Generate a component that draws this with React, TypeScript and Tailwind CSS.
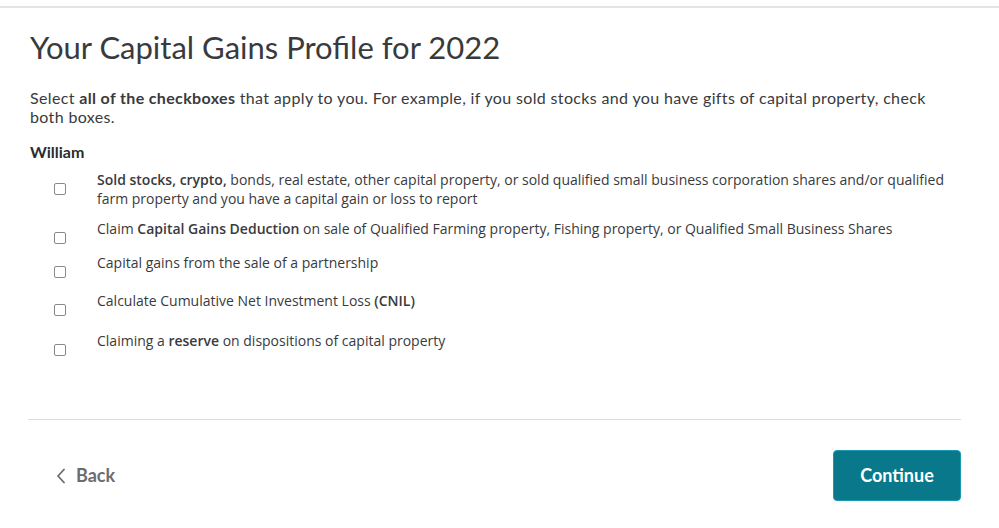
import React from 'react';

const items: React.ReactNode[] = [
  <>
    <b>Sold stocks, crypto,</b> bonds, real estate, other capital property, or sold qualified small business corporation
    shares and/or qualified farm property and you have a capital gain or loss to report
  </>,
  <>
    Claim <b>Capital Gains Deduction</b> on sale of Qualified Farming property, Fishing property, or Qualified Small
    Business Shares
  </>,
  <>Capital gains from the sale of a partnership</>,
  <>
    Calculate Cumulative Net Investment Loss <b>(CNIL)</b>
  </>,
  <>
    Claiming a <b>reserve</b> on dispositions of capital property
  </>,
];

const gaps = ['mt-0', 'mt-[11px]', 'mt-[9px]', 'mt-[13px]', 'mt-[15px]'];

export default function App() {
  return (
    <div className="w-[999px] h-[528px] bg-white overflow-hidden font-['Lato',sans-serif] text-[#393a3d]">
      <div className="h-[6px]" />
      <div className="border-t-2 border-[#e4e4e8]" />

      <div className="pl-[30px] pr-[38px]">
        <h1 className="mt-[20px] text-[31px] leading-[38px] font-normal text-[#393a3d]">
          Your Capital Gains Profile for 2022
        </h1>

        <p className="mt-[22px] text-[16px] leading-[19px] tracking-[0.35px] pr-[30px]">
          Select <b>all of the checkboxes</b> that apply to you. For example, if you sold stocks and you have gifts of
          capital property, check both boxes.
        </p>

        <div className="mt-[16px] text-[16px] leading-[19px] font-bold text-[#2b2c2e]">William</div>

        <ul className="mt-[9px] font-['Open_Sans',sans-serif] text-[14px] leading-[19px] text-[#393a3d]">
          {items.map((content, i) => (
            <li key={i} className={`flex items-start ${gaps[i]}`}>
              <span className="w-[67px] shrink-0 pl-[24px] pt-[13px]">
                <span className="block w-[12px] h-[12px] rounded-[2px] border border-[#8a8a8e] bg-white" />
              </span>
              <span className="[&_b]:font-semibold">{content}</span>
            </li>
          ))}
        </ul>
      </div>

      <div className="mr-[38px] ml-[28px] mt-[63px] border-t border-[#dcdcdc]" />

      <div className="flex items-center justify-between pl-[56px] pr-[38px] mt-[30px]">
        <button className="flex items-center gap-[10px] text-[18px] font-bold text-[#6b6c72]">
          <svg width="10" height="16" viewBox="0 0 10 16" fill="none">
            <path d="M8 1.5 L2 8 L8 14.5" stroke="#6b6c72" strokeWidth="1.8" strokeLinecap="round" strokeLinejoin="round" />
          </svg>
          Back
        </button>
        <button className="w-[128px] h-[51px] rounded-[4px] bg-[#08788a] border border-[#1a9ab0] text-white text-[18px] font-bold">
          Continue
        </button>
      </div>
    </div>
  );
}
